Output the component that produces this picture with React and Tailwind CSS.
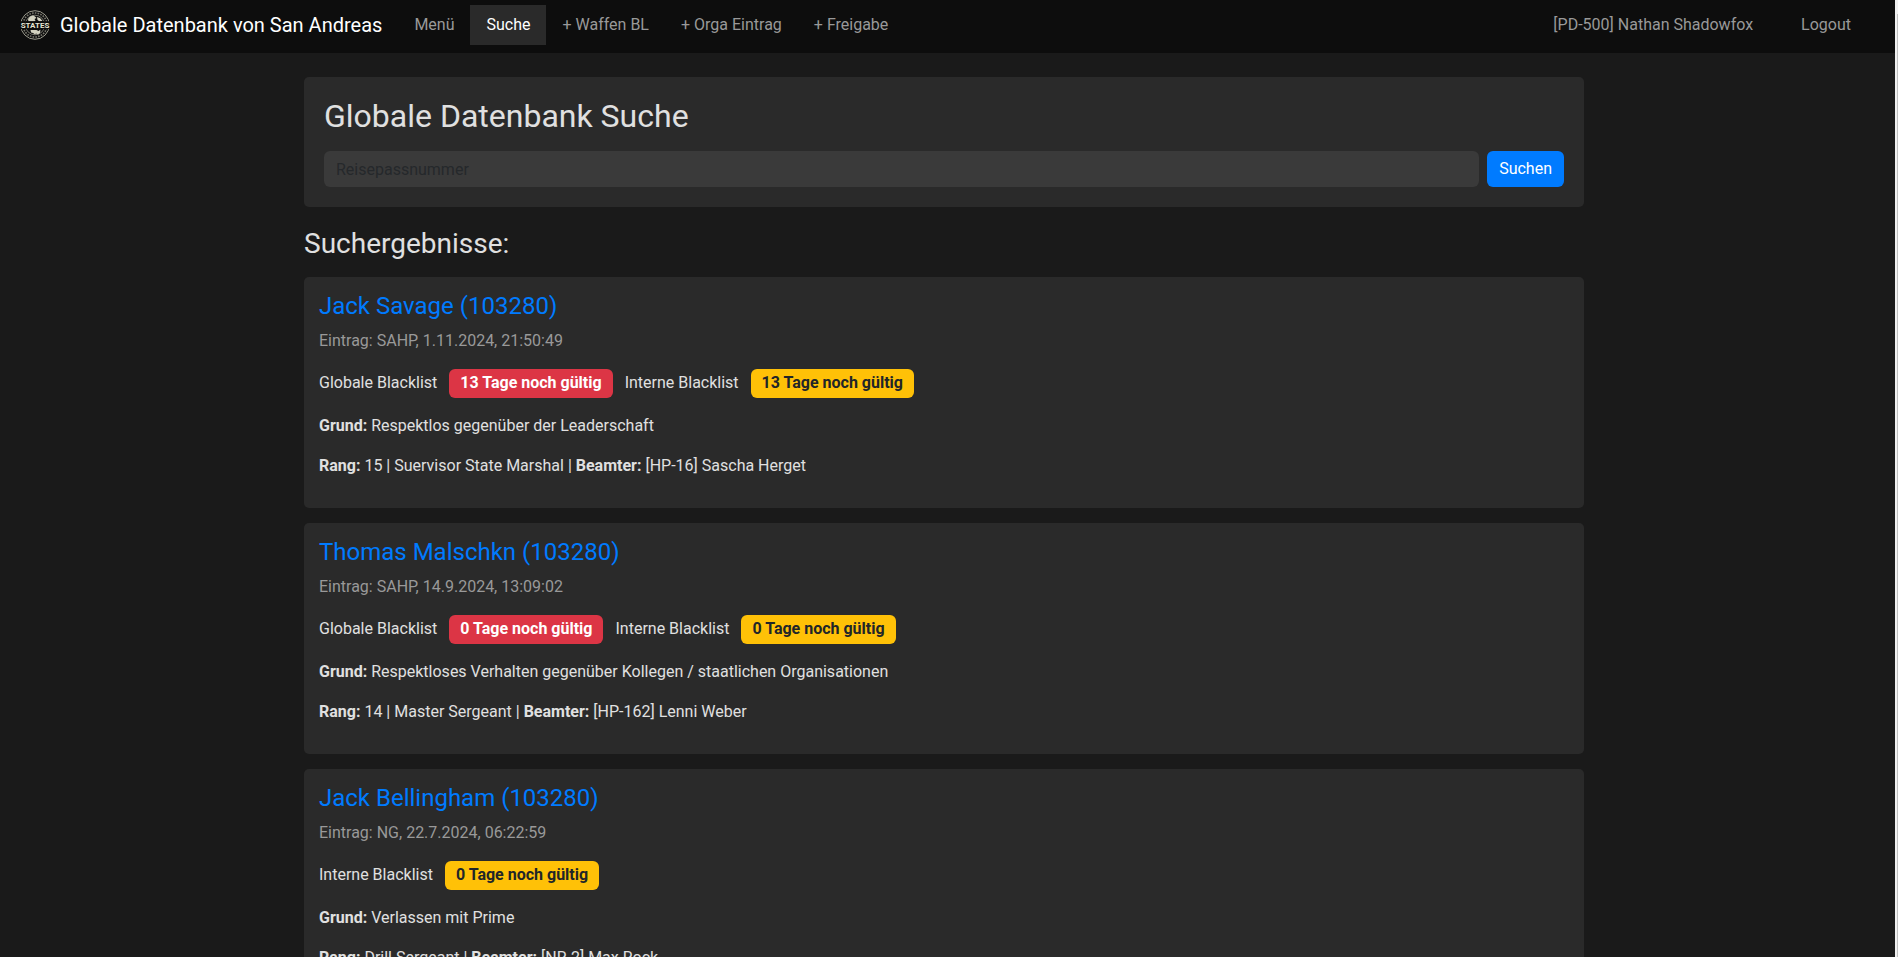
const results = [
  {
    name: 'Jack Savage (103280)',
    entry: 'SAHP, 1.11.2024, 21:50:49',
    global: '13 Tage noch gültig',
    internal: '13 Tage noch gültig',
    reason: 'Respektlos gegenüber der Leaderschaft',
    rank: '15 | Suervisor State Marshal',
    officer: '[HP-16] Sascha Herget',
  },
  {
    name: 'Thomas Malschkn (103280)',
    entry: 'SAHP, 14.9.2024, 13:09:02',
    global: '0 Tage noch gültig',
    internal: '0 Tage noch gültig',
    reason: 'Respektloses Verhalten gegenüber Kollegen / staatlichen Organisationen',
    rank: '14 | Master Sergeant',
    officer: '[HP-162] Lenni Weber',
  },
  {
    name: 'Jack Bellingham (103280)',
    entry: 'NG, 22.7.2024, 06:22:59',
    internal: '0 Tage noch gültig',
    reason: 'Verlassen mit Prime',
    rank: 'Drill Sergeant',
    officer: '[NR-2] Max Rock',
  },
];

function Logo() {
  return (
    <svg className="size-[30px] shrink-0" viewBox="0 0 30 30" fill="none" aria-hidden="true">
      <circle cx="15" cy="15" r="14.3" stroke="#9a998c" strokeWidth="1" />
      <circle cx="15" cy="15" r="12" stroke="#77766c" strokeWidth="1.6" strokeDasharray="1.6 1.2" />
      <circle cx="15" cy="15" r="9.8" stroke="#8d8c80" strokeWidth="0.8" />
      <path d="M8 9l2-2.500 3-1 2 1 1.500 1.500-2 1 1 1.500-1 1h-6zM17 7l3 1 2.500 3-3 .5-2-1.500zM10.500 20h6l2 1 2-1.500-.5 3.500-2 1.500-2-1-1 1-2-1.500-2-.5z" fill="#d3d2c0" />
      <rect x="0" y="11.2" width="30" height="8" fill="#0d0d0d" />
      <text x="15" y="18" textAnchor="middle" fontSize="8" fontWeight="700" fill="#e6e5d3" fontFamily="Roboto, sans-serif">STATES</text>
    </svg>
  );
}

function NavLink({ active, children }) {
  return (
    <a
      href="#"
      aria-current={active ? 'page' : undefined}
      className={
        active
          ? 'bg-[#2a2a2a] px-4 py-2 text-white'
          : 'px-4 py-2 text-[#999999]'
      }
    >
      {children}
    </a>
  );
}

function Result({ item }) {
  return (
    <article className="rounded-[5px] bg-[#2a2a2a] px-[15px] pt-[15px] pb-[14px]">
      <h3 className="mb-2 text-2xl leading-[29px]">
        <a href="#" className="text-[#007bff]">{item.name}</a>
      </h3>
      <p className="mb-4 text-[#999999]">Eintrag: {item.entry}</p>
      <div className="mb-4 flex items-baseline gap-3">
        {item.global && (
          <>
            <span>Globale Blacklist</span>
            <span className="rounded-md bg-[#dc3545] px-[11px] pt-[5px] pb-[7px] leading-[17px] font-bold text-white">{item.global}</span>
          </>
        )}
        <span>Interne Blacklist</span>
        <span className="rounded-md bg-[#ffc107] px-[11px] pt-[5px] pb-[7px] leading-[17px] font-bold text-[#212529]">{item.internal}</span>
      </div>
      <p className="mb-4"><strong>Grund:</strong> {item.reason}</p>
      <p className="mb-4"><strong>Rang:</strong> {item.rank} | <strong>Beamter:</strong> {item.officer}</p>
    </article>
  );
}

export default function App() {
  return (
    <div className="flex h-screen bg-[#1a1a1a] font-['Roboto',sans-serif] text-base text-[#e0e0e0]">
      <div className="min-w-0 flex-1 overflow-hidden">
        <nav className="flex items-center bg-[#0d0d0d] pt-[5px] pr-7 pb-2 pl-5">
          <a href="#" className="mr-4 flex items-center gap-[10px] text-xl text-white">
            <Logo />
            Globale Datenbank von San Andreas
          </a>
          <NavLink>Menü</NavLink>
          <NavLink active>Suche</NavLink>
          <NavLink>+ Waffen BL</NavLink>
          <NavLink>+ Orga Eintrag</NavLink>
          <NavLink>+ Freigabe</NavLink>
          <div className="ml-auto flex gap-4">
            <NavLink>[PD-500] Nathan Shadowfox</NavLink>
            <NavLink>Logout</NavLink>
          </div>
        </nav>
        <div className="pr-[7px]">
          <main className="mx-auto max-w-[1280px] pt-6">
            <section className="mb-5 rounded-[5px] bg-[#2a2a2a] p-5">
              <h1 className="mb-4 text-[32px] leading-[38px]">Globale Datenbank Suche</h1>
              <form className="flex gap-2" onSubmit={(e) => e.preventDefault()}>
                <input
                  type="text"
                  aria-label="Reisepassnummer"
                  placeholder="Reisepassnummer"
                  className="h-9 min-w-0 flex-1 rounded-md bg-[#3a3a3a] px-3 text-white placeholder:text-[#25282b]"
                />
                <button type="submit" className="h-9 rounded-md bg-[#007bff] px-3 text-white">Suchen</button>
              </form>
            </section>
            <h2 className="mb-4 text-[28px] leading-[34px]">Suchergebnisse:</h2>
            <div className="flex flex-col gap-[15px]">
              {results.map((item) => (
                <Result key={item.name} item={item} />
              ))}
            </div>
          </main>
        </div>
      </div>
      <div className="flex w-[3px] justify-end bg-[#f1f1f1] pt-[14px]">
        <div className="w-px bg-[#c1c1c1]" />
      </div>
    </div>
  );
}
